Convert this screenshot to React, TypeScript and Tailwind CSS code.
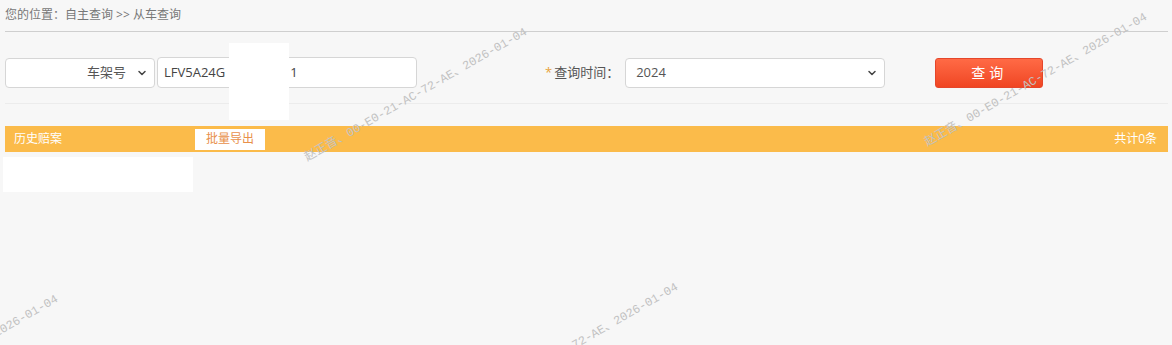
import { ChevronDown } from "lucide-react";

const marks = [
  { cx: 416, cy: 95, text: "赵正音、00-E0-21-AC-72-AE、2026-01-04" },
  { cx: 1036, cy: 80, text: "赵正音、00-E0-21-AC-72-AE、2026-01-04" },
  { cx: 567, cy: 350, text: "赵正音、00-E0-21-AC-72-AE、2026-01-04" },
  { cx: -53, cy: 362, text: "赵正音、00-E0-21-AC-72-AE、2026-01-04" },
];

function FakeSelect({ value, className, right }: { value: string; className: string; right?: boolean }) {
  return (
    <div
      className={`flex h-[30px] items-center rounded-[4px] border border-[#d6d6d6] bg-white pl-[10px] pr-[6px] text-[13px] text-[#555] ${className}`}
    >
      <span className={`flex-1 ${right ? "text-right pr-[10px]" : ""}`}>{value}</span>
      <ChevronDown size={12} strokeWidth={3} className="text-[#444]" />
    </div>
  );
}

export default function App() {
  return (
    <div
      className="relative h-[345px] w-[1172px] overflow-hidden bg-[#f7f7f7] pl-[5px] pr-[4px]"
      style={{ fontFamily: '"Open Sans", "Noto Sans CJK SC", sans-serif' }}
    >
      <div className="flex h-[32px] items-center border-b border-[#cfcfcf] pb-[1px] text-[12px] text-[#777]">
        您的位置：自主查询 &gt;&gt; 从车查询
      </div>

      <div className="flex items-center border-b border-[#ececec] pt-[25px] pb-[15px]">
        <FakeSelect value="车架号" className="w-[150px]" right />
        <div className="ml-[2px] flex h-[31px] w-[260px] items-center rounded-[4px] border border-[#d6d6d6] bg-white pl-[6px] text-[13px] text-[#444]">
          LFV5A24G<span className="ml-[65px]">1</span>
        </div>
        <div className="ml-[128px] flex items-center text-[13px] text-[#555]">
          <span className="mr-[2px] text-[#e8a33a]">*</span>查询时间：
        </div>
        <FakeSelect value="2024" className="ml-[6px] w-[260px]" />
        <button className="ml-[50px] h-[30px] w-[108px] rounded-[3px] border border-[#e5462b] bg-gradient-to-b from-[#ff6a45] to-[#f04522] text-[14px] tracking-[4px] text-white">
          查询
        </button>
      </div>

      <div className="mt-[22px] flex h-[26px] items-center bg-[#fbbb4a] pl-[9px] pr-[11px] text-[12px] text-white">
        <span className="w-[181px]">历史赔案</span>
        <span className="flex h-[21px] w-[70px] items-center justify-center bg-white text-[#e8904a]">批量导出</span>
        <span className="ml-auto">共计0条</span>
      </div>

      <div className="ml-[-2px] mt-[5px] h-[35px] w-[190px] bg-white" />

      <div className="absolute left-[229px] top-[43px] h-[77px] w-[60px] bg-white" />

      {marks.map((m, i) => (
        <div
          key={i}
          className="pointer-events-none absolute h-[14px] w-[270px] -rotate-[30deg] whitespace-nowrap text-center text-[12px] leading-[14px] text-[#c2c2c2]"
          style={{ left: m.cx - 135, top: m.cy - 7, fontFamily: '"Liberation Mono", "Noto Sans CJK SC", monospace' }}
        >
          {m.text}
        </div>
      ))}
    </div>
  );
}
